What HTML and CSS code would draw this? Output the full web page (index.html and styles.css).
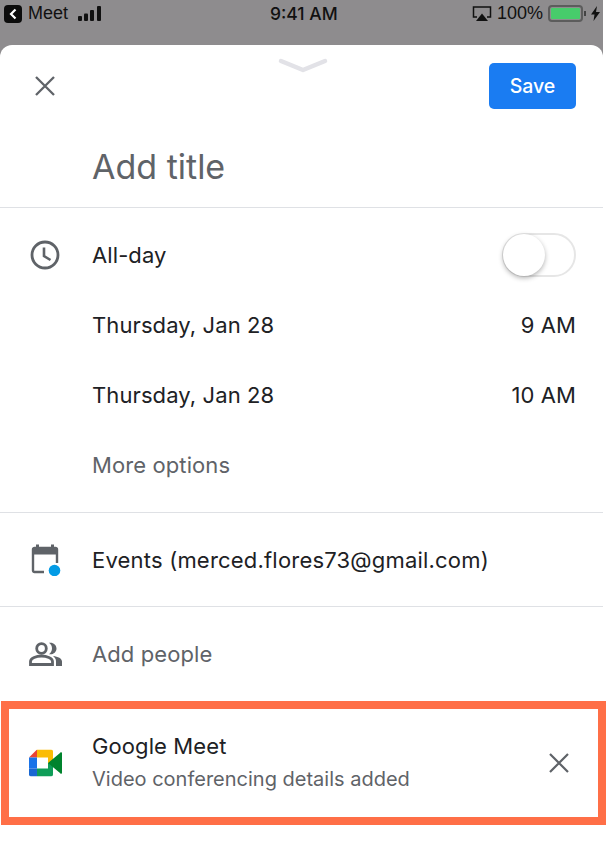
FILE: index.html
```html
<!DOCTYPE html>
<html lang="en">
<head>
    <meta charset="UTF-8">
    <meta name="viewport" content="width=device-width, initial-scale=1.0">
    <title>Add event</title>
    <link rel="stylesheet" href="styles.css">
</head>
<body>
    <div class="status-bar">
        <div class="status-left">
            <span class="back-badge">
                <svg width="10" height="12" viewBox="0 0 10 12"><path d="M7.500 1.500 3 6l4.500 4.500" fill="none" stroke="#fff" stroke-width="2.200"/></svg>
            </span>
            <span>Meet</span>
            <svg class="signal" width="25" height="16" viewBox="0 0 25 16">
                <rect x="0" y="10" width="4" height="5" rx="1"/>
                <rect x="6" y="7.500" width="4" height="7.500" rx="1"/>
                <rect x="12" y="4" width="4" height="11" rx="1"/>
                <rect x="19" y="0" width="4" height="15" rx="1"/>
            </svg>
        </div>
        <div class="status-time">9:41 AM</div>
        <div class="status-right">
            <svg width="20" height="16" viewBox="0 0 20 16">
                <path d="M5 11H1.500V1h17v10H15" fill="none" stroke="#111" stroke-width="1.500"/>
                <path d="M10 7.500 16 15H4z" fill="#111"/>
            </svg>
            <span>100%</span>
            <span class="battery"><span class="battery-fill"></span></span>
            <span class="battery-tip"></span>
            <svg width="9" height="15" viewBox="0 0 9 15"><path d="M6 0 0 8.500h3.500L2.500 15 9 6H5z" fill="#111"/></svg>
        </div>
    </div>

    <div class="sheet">
        <svg class="handle" width="50" height="16" viewBox="0 0 50 16">
            <path d="M3 3 25 12 47 3" fill="none" stroke="#e2e2e7" stroke-width="4.500" stroke-linecap="round" stroke-linejoin="round"/>
        </svg>

        <div class="sheet-head">
            <svg class="close-icon" width="24" height="24" viewBox="0 0 24 24">
                <path d="M3 3l18 18M21 3 3 21" fill="none" stroke="#5f6368" stroke-width="2.300"/>
            </svg>
            <button class="save-btn">Save</button>
        </div>

        <div class="title-row">Add title</div>

        <div class="section date-section">
            <div class="row allday-row">
                <svg class="row-icon" width="32" height="32" viewBox="0 0 32 32">
                    <circle cx="16" cy="16" r="13" fill="none" stroke="#5f6368" stroke-width="2.800"/>
                    <path d="M15 8.500V17l6.500 4" fill="none" stroke="#5f6368" stroke-width="2.600"/>
                </svg>
                <span class="row-text">All-day</span>
                <span class="toggle"><span class="toggle-knob"></span></span>
            </div>
            <div class="row">
                <span class="row-text">Thursday, Jan 28</span>
                <span class="row-text">9 AM</span>
            </div>
            <div class="row">
                <span class="row-text">Thursday, Jan 28</span>
                <span class="row-text">10 AM</span>
            </div>
            <div class="row">
                <span class="row-text muted">More options</span>
            </div>
        </div>

        <div class="section calendar-section">
            <div class="row">
                <svg class="row-icon" width="32" height="32" viewBox="0 0 32 32">
                    <path d="M15 28H5.500a1.500 1.500 0 0 1-1.500-1.500V5.500A1.500 1.500 0 0 1 5.500 4h21A1.500 1.500 0 0 1 28 5.500V19" fill="none" stroke="#5f6368" stroke-width="2.400"/>
                    <rect x="4" y="4" width="24" height="6.500" fill="#5f6368"/>
                    <rect x="7" y="0.500" width="3" height="4" fill="#5f6368"/>
                    <rect x="22" y="0.500" width="3" height="4" fill="#5f6368"/>
                    <circle cx="25.500" cy="26.500" r="5.800" fill="#039be5"/>
                </svg>
                <span class="row-text account-text">Events (merced.flores73@gmail.com)</span>
            </div>
        </div>

        <div class="section people-section">
            <div class="row">
                <svg class="row-icon" width="33" height="24" viewBox="0 0 33 24">
                    <circle cx="12.500" cy="6.500" r="4.800" fill="none" stroke="#5f6368" stroke-width="2.800"/>
                    <path d="M1.500 22.500v-3c0-3.500 6-5.500 11-5.500s11 2 11 5.500v3z" fill="none" stroke="#5f6368" stroke-width="2.800"/>
                    <path d="M20 .8c4-.8 7.500 2 7.500 5.700s-3.500 6.500-7.500 5.700c2-1.500 3-3.500 3-5.700S22 2.300 20 .8z" fill="#5f6368"/>
                    <path d="M24 14c5 .5 9 2.500 9 5.500V24h-6v-4.500c0-2.500-1-4-3-5.500z" fill="#5f6368"/>
                </svg>
                <span class="row-text muted">Add people</span>
            </div>
        </div>

        <div class="meet-box">
            <svg class="row-icon" width="33" height="27" viewBox="0 0 33 27">
                <path d="M0 8 8 0v8z" fill="#ea4335"/>
                <path d="M8 0h14a2 2 0 0 1 2 2v11.500h-5V8H8z" fill="#fbbc04"/>
                <path d="M0 8h8v11H0z" fill="#1a73e8"/>
                <path d="M0 19h8v8H2a2 2 0 0 1-2-2z" fill="#1967d2"/>
                <path d="M8 19h11v-5.500h5V25a2 2 0 0 1-2 2H8z" fill="#0f9d58"/>
                <path d="M19 13.500 31 3.500a1 1 0 0 1 2 .500v19a1 1 0 0 1-2 .500z" fill="#00832d"/>
            </svg>
            <div class="meet-text">
                <div class="row-text">Google Meet</div>
                <div class="meet-sub">Video conferencing details added</div>
            </div>
            <svg class="meet-close" width="20" height="20" viewBox="0 0 20 20">
                <path d="M1 1l18 18M19 1 1 19" fill="none" stroke="#5f6368" stroke-width="2.200"/>
            </svg>
        </div>
    </div>
</body>
</html>
```

FILE: styles.css
```css
* {
    box-sizing: border-box;
}
html, body {
    height: 100%;
}
body {
    font-family: Inter, Roboto, sans-serif;
    margin: 0;
    background: white;
    display: flex;
    flex-direction: column;
    color: #202124;
    overflow: hidden;
}

/* Status bar */
.status-bar {
    height: 57px;
    flex: none;
    position: relative;
    margin-right: 3px;
    background: #8e8c8e;
    display: flex;
    justify-content: space-between;
    padding: 0 3px 30px 4px;
    align-items: center;
    font-family: "Liberation Sans", sans-serif;
    font-size: 18px;
    color: #111;
}
.status-left, .status-right {
    display: flex;
    align-items: center;
}
.status-left {
    gap: 6px;
}
.status-right {
    gap: 5px;
}
.back-badge {
    width: 18px;
    height: 18px;
    border-radius: 4px;
    background: #0c0c0c;
    display: flex;
    align-items: center;
    justify-content: center;
}
.signal {
    margin-left: 4px;
}
.signal rect {
    fill: #111;
}
.status-time {
    position: absolute;
    left: 270px;
    top: 3px;
    font-family: Inter, sans-serif;
    font-size: 17.500px;
    font-weight: 500;
}
.battery {
    width: 35px;
    height: 17px;
    border: 2px solid #5c5c5c;
    border-radius: 4px;
    padding: 1px;
    display: flex;
}
.battery-fill {
    flex: 1;
    background: #47cc6b;
    border-radius: 1px;
}
.battery-tip {
    width: 2px;
    height: 5px;
    background: #444;
    margin-left: -4px;
}

/* Sheet */
.sheet {
    flex: 1;
    position: relative;
    margin: -12px 3px 0 0;
    background: white;
    border-radius: 12px 12px 0 0;
}
.handle {
    position: absolute;
    left: 278px;
    top: 13px;
}
.sheet-head {
    display: flex;
    justify-content: space-between;
    align-items: center;
    padding: 18px 27px 0 33px;
}
.save-btn {
    width: 87px;
    height: 46px;
    background: #1a7cf2;
    color: white;
    border: none;
    border-radius: 5px;
    font-family: inherit;
    font-size: 19.500px;
    font-weight: 500;
}
.title-row {
    height: 98px;
    padding: 12px 0 0 92px;
    font-size: 34px;
    line-height: 92px;
    color: #5f6368;
}
.section {
    border-top: 1px solid #dfe1e5;
}
.date-section {
    height: 305px;
    padding-top: 12px;
}
.calendar-section {
    height: 94px;
    padding-top: 12px;
}
.people-section {
    height: 95px;
    padding-top: 12px;
}
.row {
    position: relative;
    height: 70px;
    display: flex;
    align-items: center;
    justify-content: space-between;
    padding: 0 27px 0 92px;
}
.row-icon {
    position: absolute;
    left: 29px;
    top: 50%;
    transform: translateY(-50%);
}
.row-text {
    font-size: 22px;
    letter-spacing: 0.1px;
    color: #202124;
}
.account-text {
    letter-spacing: 0.2px;
}
.muted {
    color: #5f6368;
}
.toggle {
    width: 74px;
    height: 44px;
    border: 2px solid #e6e6e6;
    border-radius: 22px;
    position: relative;
}
.toggle-knob {
    position: absolute;
    left: -1px;
    top: -1px;
    width: 42px;
    height: 42px;
    border-radius: 50%;
    background: white;
    box-shadow: 0 2px 5px rgba(0, 0, 0, 0.3);
}

/* Google Meet row */
.meet-box {
    position: absolute;
    left: 1px;
    right: -3px;
    top: 656px;
    height: 124px;
    border: 8px solid #ff6f47;
    display: flex;
    align-items: center;
    justify-content: space-between;
    padding: 0 29px 0 83px;
}
.meet-box .row-icon {
    left: 20px;
}
.meet-text {
    display: flex;
    flex-direction: column;
    gap: 8px;
    padding-bottom: 2px;
}
.meet-sub {
    font-size: 20px;
    color: #5f6368;
}
```
